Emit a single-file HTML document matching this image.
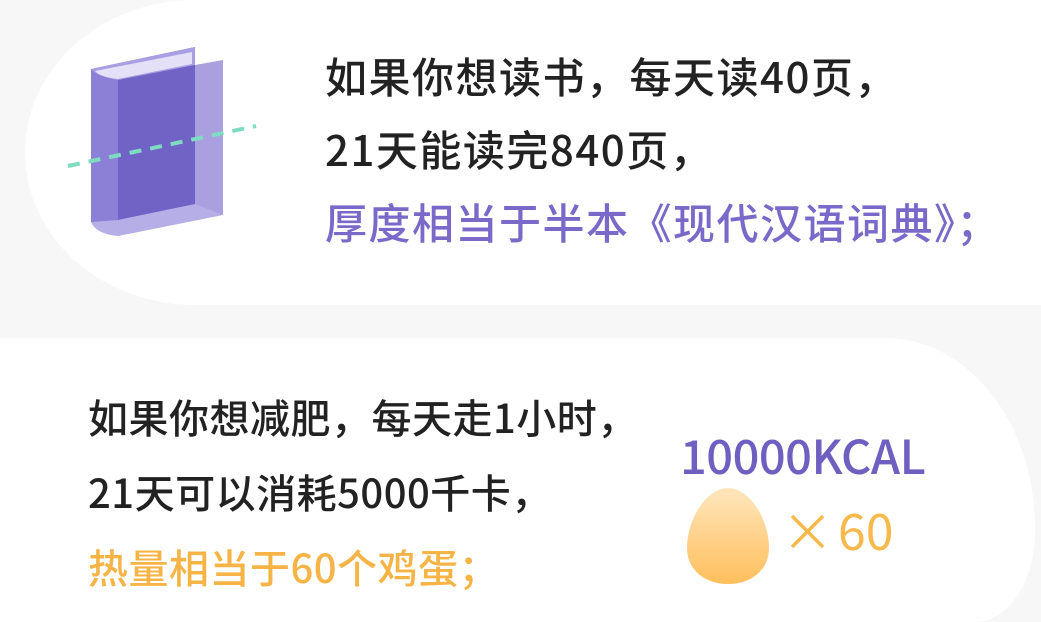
<!DOCTYPE html>
<html><head><meta charset="utf-8"><style>
html,body{margin:0;padding:0;width:1041px;height:622px;overflow:hidden;}
body{background:#f7f7f7;position:relative;font-family:"Noto Sans CJK SC","Liberation Sans",sans-serif;}
.wrap{position:absolute;left:0;top:0;width:1041px;height:622px;overflow:hidden;}
.card1{position:absolute;left:25px;top:0;width:1016px;height:305px;background:#fff;border-radius:170px 0 0 170px/152px 0 0 152px;}
.card2{position:absolute;left:0;top:338px;width:1035px;height:284px;background:#fff;border-radius:0 150px 60px 0/0 190px 90px 0;}
.t{position:absolute;color:#222;white-space:nowrap;font-weight:500;}
.p{color:#7a69c8;}
.o{color:#f6b447;}
</style></head><body><div class="wrap">
<div class="card1"></div>
<div class="card2"></div>
<svg style="position:absolute;left:0;top:0" width="300" height="300">
  <path d="M91 69 L195 47 L195 215 L118 236 L91 222 Z" fill="#8b7fd6"/>
  <path d="M91 69 L195 47 L195 65 L118 80 Q96 76 91 69Z" fill="#a89ee2"/>
  <path d="M95 71 L192 52 L192 64 L118 79 Q100 77 95 71Z" fill="#e4e0f7"/>
  <path d="M118 80 L195 65 L195 204 L118 220 Z" fill="#7163c6"/>
  <path d="M195 65 L223 60 L223 215 L195 215 Z" fill="#aaa0e0"/>
  <path d="M91 222 Q96 234 118 236 L223 215 L195 204 L118 220Z" fill="#b6aee6"/>
  <line x1="68" y1="166" x2="256" y2="126" stroke="#7fdcc2" stroke-width="4" stroke-dasharray="12 9"/>
</svg>
<div class="t" style="left:325px;top:39px;font-size:42px;letter-spacing:1.5px;">
  <div style="height:73px;line-height:73px">如果你想读书，每天读40页，</div>
  <div style="height:73px;line-height:73px">21天能读完840页，</div>
  <div class="p" style="height:73px;line-height:73px">厚度相当于半本《现代汉语词典》；</div>
</div>
<div class="t" style="left:88px;top:379px;font-size:40px;letter-spacing:0.5px;">
  <div style="height:75px;line-height:75px">如果你想减肥，每天走1小时，</div>
  <div style="height:75px;line-height:75px">21天可以消耗5000千卡，</div>
  <div class="o" style="height:75px;line-height:75px">热量相当于60个鸡蛋；</div>
</div>
<div style="position:absolute;left:680px;top:430px;font-size:47px;color:#6f5fc0;letter-spacing:-0.5px;line-height:48px;font-weight:500;">10000KCAL</div>
<svg style="position:absolute;left:680px;top:480px" width="240" height="110">
  <defs><linearGradient id="eg" x1="0" y1="0" x2="0" y2="1"><stop offset="0" stop-color="#ffe6bd"/><stop offset="1" stop-color="#ffbf5c"/></linearGradient></defs>
  <path d="M48 8 C70 8 89 40 89 68 C89 90 71 104 48 104 C25 104 7 90 7 68 C7 40 26 8 48 8Z" fill="url(#eg)"/>
  <path d="M112 36 L143 67 M143 36 L112 67" stroke="#f8b94c" stroke-width="3.5"/>
</svg>
<div style="position:absolute;left:838px;top:502px;font-size:50px;color:#f8b94c;line-height:54px;">60</div>
</div></body></html>
